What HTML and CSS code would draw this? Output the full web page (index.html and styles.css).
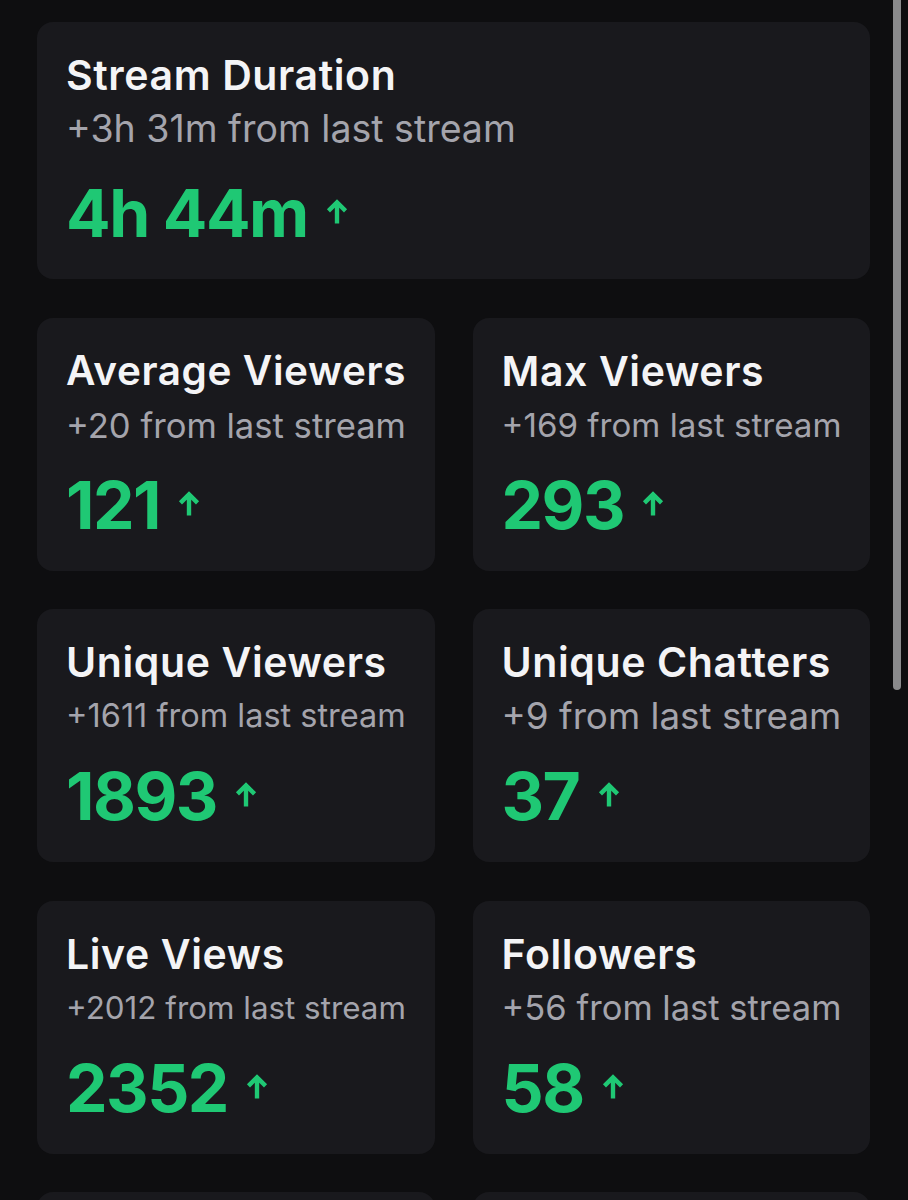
FILE: index.html
```html
<!DOCTYPE html>
<html lang="en">
<head>
<meta charset="utf-8">
<title>Stream Stats</title>
<link rel="stylesheet" href="styles.css">
</head>
<body>
<main class="stats">
  <section class="card card-wide">
    <h2 class="card-title fit"><span>Stream Duration</span></h2>
    <p class="card-sub fit"><span>+3h 31m from last stream</span></p>
    <div class="card-value"><span class="value-num">4h 44m</span><svg class="arrow" viewBox="0 0 20 24" aria-hidden="true"><path d="M10 23.5V3.2M1.8 11.4L10 3.2L18.2 11.4"/></svg></div>
  </section>
  <section class="card">
    <h2 class="card-title fit"><span>Average Viewers</span></h2>
    <p class="card-sub fit"><span>+20 from last stream</span></p>
    <div class="card-value"><span class="value-num">121</span><svg class="arrow" viewBox="0 0 20 24" aria-hidden="true"><path d="M10 23.5V3.2M1.8 11.4L10 3.2L18.2 11.4"/></svg></div>
  </section>
  <section class="card">
    <h2 class="card-title fit"><span>Max Viewers</span></h2>
    <p class="card-sub fit"><span>+169 from last stream</span></p>
    <div class="card-value"><span class="value-num">293</span><svg class="arrow" viewBox="0 0 20 24" aria-hidden="true"><path d="M10 23.5V3.2M1.8 11.4L10 3.2L18.2 11.4"/></svg></div>
  </section>
  <section class="card">
    <h2 class="card-title fit"><span>Unique Viewers</span></h2>
    <p class="card-sub fit"><span>+1611 from last stream</span></p>
    <div class="card-value"><span class="value-num">1893</span><svg class="arrow" viewBox="0 0 20 24" aria-hidden="true"><path d="M10 23.5V3.2M1.8 11.4L10 3.2L18.2 11.4"/></svg></div>
  </section>
  <section class="card">
    <h2 class="card-title fit"><span>Unique Chatters</span></h2>
    <p class="card-sub fit"><span>+9 from last stream</span></p>
    <div class="card-value"><span class="value-num">37</span><svg class="arrow" viewBox="0 0 20 24" aria-hidden="true"><path d="M10 23.5V3.2M1.8 11.4L10 3.2L18.2 11.4"/></svg></div>
  </section>
  <section class="card">
    <h2 class="card-title fit"><span>Live Views</span></h2>
    <p class="card-sub fit"><span>+2012 from last stream</span></p>
    <div class="card-value"><span class="value-num">2352</span><svg class="arrow" viewBox="0 0 20 24" aria-hidden="true"><path d="M10 23.5V3.2M1.8 11.4L10 3.2L18.2 11.4"/></svg></div>
  </section>
  <section class="card">
    <h2 class="card-title fit"><span>Followers</span></h2>
    <p class="card-sub fit"><span>+56 from last stream</span></p>
    <div class="card-value"><span class="value-num">58</span><svg class="arrow" viewBox="0 0 20 24" aria-hidden="true"><path d="M10 23.5V3.2M1.8 11.4L10 3.2L18.2 11.4"/></svg></div>
  </section>
  <section class="card card-empty"></section>
  <section class="card card-empty"></section>
</main>
<div class="scrollbar"></div>
<script src="script.js"></script>
</body>
</html>
```

FILE: styles.css
```css
html, body {
  margin: 0;
  height: 1200px;
  overflow: hidden;
  background: #0e0e10;
}

body {
  font-family: Inter, "Noto Sans", "Liberation Sans", sans-serif;
  -webkit-font-smoothing: antialiased;
}

.stats {
  display: grid;
  grid-template-columns: 1fr 1fr;
  gap: 38.5px 38px;
  padding: 22px 38px 0 37px;
}

.card {
  background: #19191d;
  border-radius: 16px;
  padding: 29px 29px 26px;
  min-width: 0;
  overflow: hidden;
}

.card-wide {
  grid-column: 1 / -1;
}

.card-empty {
  height: 253px;
  box-sizing: border-box;
}

.card-title {
  margin: 0;
  font-size: 41px;
  line-height: 48px;
  font-weight: 600;
  color: #f4f4f6;
  white-space: nowrap;
  letter-spacing: 0.6px;
}

.card-sub {
  margin: 8px 0 0;
  font-size: 37.5px;
  line-height: 44px;
  font-weight: 400;
  color: #a4a4ac;
  white-space: nowrap;
}

.card-value {
  margin-top: 18px;
  height: 80px;
  display: flex;
  align-items: center;
  gap: 18px;
}

.card-wide .card-value {
  margin-top: 22px;
}

.value-num {
  font-size: 66px;
  line-height: 80px;
  font-weight: 700;
  color: #1fc874;
  letter-spacing: -1.5px;
}

.arrow {
  width: 22px;
  height: 25px;
  margin-top: -3px;
  fill: none;
  stroke: #1fc874;
  stroke-width: 4.2;
}

.scrollbar {
  position: fixed;
  top: 0;
  right: 7px;
  width: 8px;
  height: 690px;
  background: #8a8a8c;
  border-radius: 0 0 4px 4px;
}
```

FILE: script.js
```js
function fitText() {
  document.querySelectorAll('.fit').forEach(function (el) {
    el.style.fontSize = '';
    var span = el.firstElementChild;
    var avail = el.clientWidth;
    var w = span.getBoundingClientRect().width;
    if (w > avail) {
      var fs = parseFloat(getComputedStyle(el).fontSize);
      el.style.fontSize = (fs * avail / w) + 'px';
    }
  });
}
fitText();
if (document.fonts && document.fonts.ready) {
  document.fonts.ready.then(fitText);
}
```
